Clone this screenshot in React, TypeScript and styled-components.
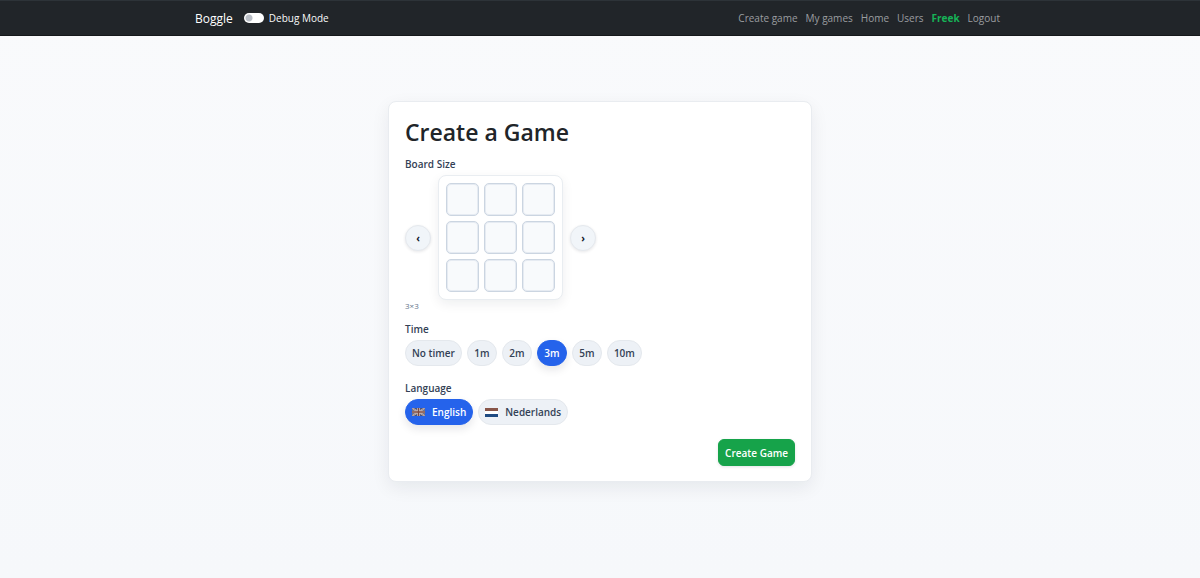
import React, { useState } from "react";
import styled, { createGlobalStyle } from "styled-components";

const GlobalStyle = createGlobalStyle`
  * { box-sizing: border-box; }
  body {
    margin: 0;
    font-family: "Open Sans", "Noto Sans", sans-serif;
    font-size: 10px;
    line-height: 16px;
    color: #212529;
    background: #f8fafc;
  }
  button { font: inherit; cursor: pointer; }
`;

const Page = styled.div`
  min-height: 100vh;
  display: flex;
  flex-direction: column;
  background: linear-gradient(180deg, #f9fafc 0%, #f6f8fb 100%);
`;

const Navbar = styled.header`
  height: 36px;
  background: #212529;
  border-top: 1px solid #2d3338;
  border-bottom: 1px solid #15181b;
`;

const NavInner = styled.div`
  max-width: 810px;
  height: 100%;
  margin: 0 auto;
  padding-right: 5px;
  display: flex;
  align-items: center;
  justify-content: space-between;
`;

const NavGroup = styled.div`
  display: flex;
  align-items: center;
  gap: 11px;
`;

const Brand = styled.a`
  color: #fff;
  font-size: 12px;
  line-height: 20px;
  padding-top: 2px;
  text-decoration: none;
`;

const SwitchLabel = styled.label`
  display: flex;
  align-items: center;
  gap: 5px;
  color: #f8f9fa;
`;

const Switch = styled.input`
  appearance: none;
  margin: 0;
  width: 20px;
  height: 10px;
  border-radius: 5px;
  background: radial-gradient(circle at 5px 5px, #b9bec6 3px, #fff 4px);
  &:checked {
    background: radial-gradient(circle at 15px 5px, #fff 3px, #2563eb 4px);
  }
`;

const NavLinks = styled.nav`
  display: flex;
  gap: 8px;
`;

const NavLink = styled.a<{ $user?: boolean }>`
  color: ${(p) => (p.$user ? "#16b357" : "#9b9da0")};
  font-weight: ${(p) => (p.$user ? 700 : 400)};
  text-decoration: none;
`;

const Main = styled.main`
  flex: 1;
  padding: 65px 16px;
`;

const Card = styled.form`
  max-width: 424px;
  margin: 0 auto;
  padding: 15px 16px;
  background: #fff;
  border: 1px solid #e9ecf0;
  border-radius: 8px;
  box-shadow: 0 6px 18px rgba(15, 23, 42, 0.07);
`;

const Title = styled.h1`
  margin: 0 0 9px;
  font-size: 23px;
  line-height: 30px;
  font-weight: 600;
`;

const Section = styled.section`
  margin-bottom: 14px;
`;

const SectionLabel = styled.h2`
  margin: 0 0 3px;
  font-size: 10px;
  line-height: 16px;
  font-weight: 600;
  color: #334155;
`;

const BoardSection = styled(Section)`
  margin-bottom: 9px;
`;

const BoardPicker = styled.div`
  display: flex;
  align-items: center;
  gap: 7px;
`;

const Arrow = styled.button`
  width: 26px;
  height: 26px;
  padding: 0;
  border: 1px solid #e5e9ee;
  border-radius: 50%;
  background: #f1f5f9;
  color: #0f172a;
  font-weight: 700;
  box-shadow: 0 1px 3px rgba(15, 23, 42, 0.1);
`;

const Board = styled.div`
  display: grid;
  grid-template-columns: repeat(3, 33px);
  gap: 5px;
  padding: 7px;
  border: 1px solid #e9edf1;
  border-radius: 8px;
  background: #fff;
  box-shadow: 0 4px 12px rgba(15, 23, 42, 0.07);
`;

const Cell = styled.span`
  height: 33px;
  border: 1px solid #cbd5e1;
  border-radius: 5px;
  background: #f8fafc;
  box-shadow: inset 0 0 0 1px #e6ebf2;
`;

const SizeNote = styled.p`
  margin: 0;
  font-size: 8px;
  line-height: 12px;
  color: #64748b;
`;

const Pills = styled.div`
  display: flex;
  flex-wrap: wrap;
  gap: 5px;
`;

const Pill = styled.button<{ $active: boolean }>`
  display: flex;
  align-items: center;
  justify-content: center;
  gap: 7px;
  height: 26px;
  min-width: 30px;
  padding: 0 6px;
  border: 1px solid ${(p) => (p.$active ? "#2563eb" : "#e4e8ed")};
  border-radius: 13px;
  background: ${(p) => (p.$active ? "#2563eb" : "#edf1f6")};
  color: ${(p) => (p.$active ? "#fff" : "#334155")};
  font-weight: 600;
  box-shadow: ${(p) => (p.$active ? "0 4px 9px rgba(15, 23, 42, 0.1)" : "none")};
`;

const Actions = styled.div`
  display: flex;
  justify-content: flex-end;
`;

const Submit = styled.button`
  height: 27px;
  padding: 0 6px;
  border: 1px solid #16a34a;
  border-radius: 6px;
  background: #16a34a;
  color: #fff;
  font-weight: 600;
  box-shadow: 0 1px 3px rgba(15, 23, 42, 0.12);
`;

const BritishFlag = () => (
  <svg width="13" height="8" viewBox="0 0 13 8" aria-hidden="true">
    <rect width="13" height="8" fill="#4a5478" />
    <path d="M0 0 13 8M13 0 0 8" stroke="#cfc4c2" strokeWidth="1.6" />
    <path d="M0 0 13 8M13 0 0 8" stroke="#8f6a64" strokeWidth="0.6" />
    <path d="M6.5 0V8M0 4H13" stroke="#d8d0cd" strokeWidth="2.6" />
    <path d="M6.5 0V8M0 4H13" stroke="#804a40" strokeWidth="1.4" />
  </svg>
);

const DutchFlag = () => (
  <svg width="13" height="9" viewBox="0 0 13 9" aria-hidden="true">
    <rect width="13" height="9" fill="#fff" />
    <rect width="13" height="3" fill="#885548" />
    <rect y="6" width="13" height="3" fill="#1f4b82" />
  </svg>
);

const times = ["No timer", "1m", "2m", "3m", "5m", "10m"];
const languages = [
  { name: "English", Flag: BritishFlag },
  { name: "Nederlands", Flag: DutchFlag },
];
const links = ["Create game", "My games", "Home", "Users", "Freek", "Logout"];

export default function App() {
  const [time, setTime] = useState("3m");
  const [language, setLanguage] = useState("English");

  return (
    <Page>
      <GlobalStyle />
      <Navbar>
        <NavInner>
          <NavGroup>
            <Brand href="#">Boggle</Brand>
            <SwitchLabel htmlFor="debug">
              <Switch id="debug" type="checkbox" role="switch" />
              Debug Mode
            </SwitchLabel>
          </NavGroup>
          <NavLinks>
            {links.map((link) => (
              <NavLink key={link} href="#" $user={link === "Freek"}>
                {link}
              </NavLink>
            ))}
          </NavLinks>
        </NavInner>
      </Navbar>
      <Main>
        <Card onSubmit={(e) => e.preventDefault()}>
          <Title>Create a Game</Title>
          <BoardSection aria-labelledby="size-label">
            <SectionLabel id="size-label">Board Size</SectionLabel>
            <BoardPicker>
              <Arrow type="button" aria-label="Smaller board">‹</Arrow>
              <Board>
                {Array.from({ length: 9 }, (_, i) => (
                  <Cell key={i} />
                ))}
              </Board>
              <Arrow type="button" aria-label="Larger board">›</Arrow>
            </BoardPicker>
            <SizeNote>3×3</SizeNote>
          </BoardSection>
          <Section aria-labelledby="time-label">
            <SectionLabel id="time-label">Time</SectionLabel>
            <Pills>
              {times.map((t) => (
                <Pill key={t} type="button" $active={t === time} aria-pressed={t === time} onClick={() => setTime(t)}>
                  {t}
                </Pill>
              ))}
            </Pills>
          </Section>
          <Section aria-labelledby="language-label">
            <SectionLabel id="language-label">Language</SectionLabel>
            <Pills>
              {languages.map(({ name, Flag }) => (
                <Pill
                  key={name}
                  type="button"
                  $active={name === language}
                  aria-pressed={name === language}
                  onClick={() => setLanguage(name)}
                >
                  <Flag />
                  {name}
                </Pill>
              ))}
            </Pills>
          </Section>
          <Actions>
            <Submit type="submit">Create Game</Submit>
          </Actions>
        </Card>
      </Main>
    </Page>
  );
}
